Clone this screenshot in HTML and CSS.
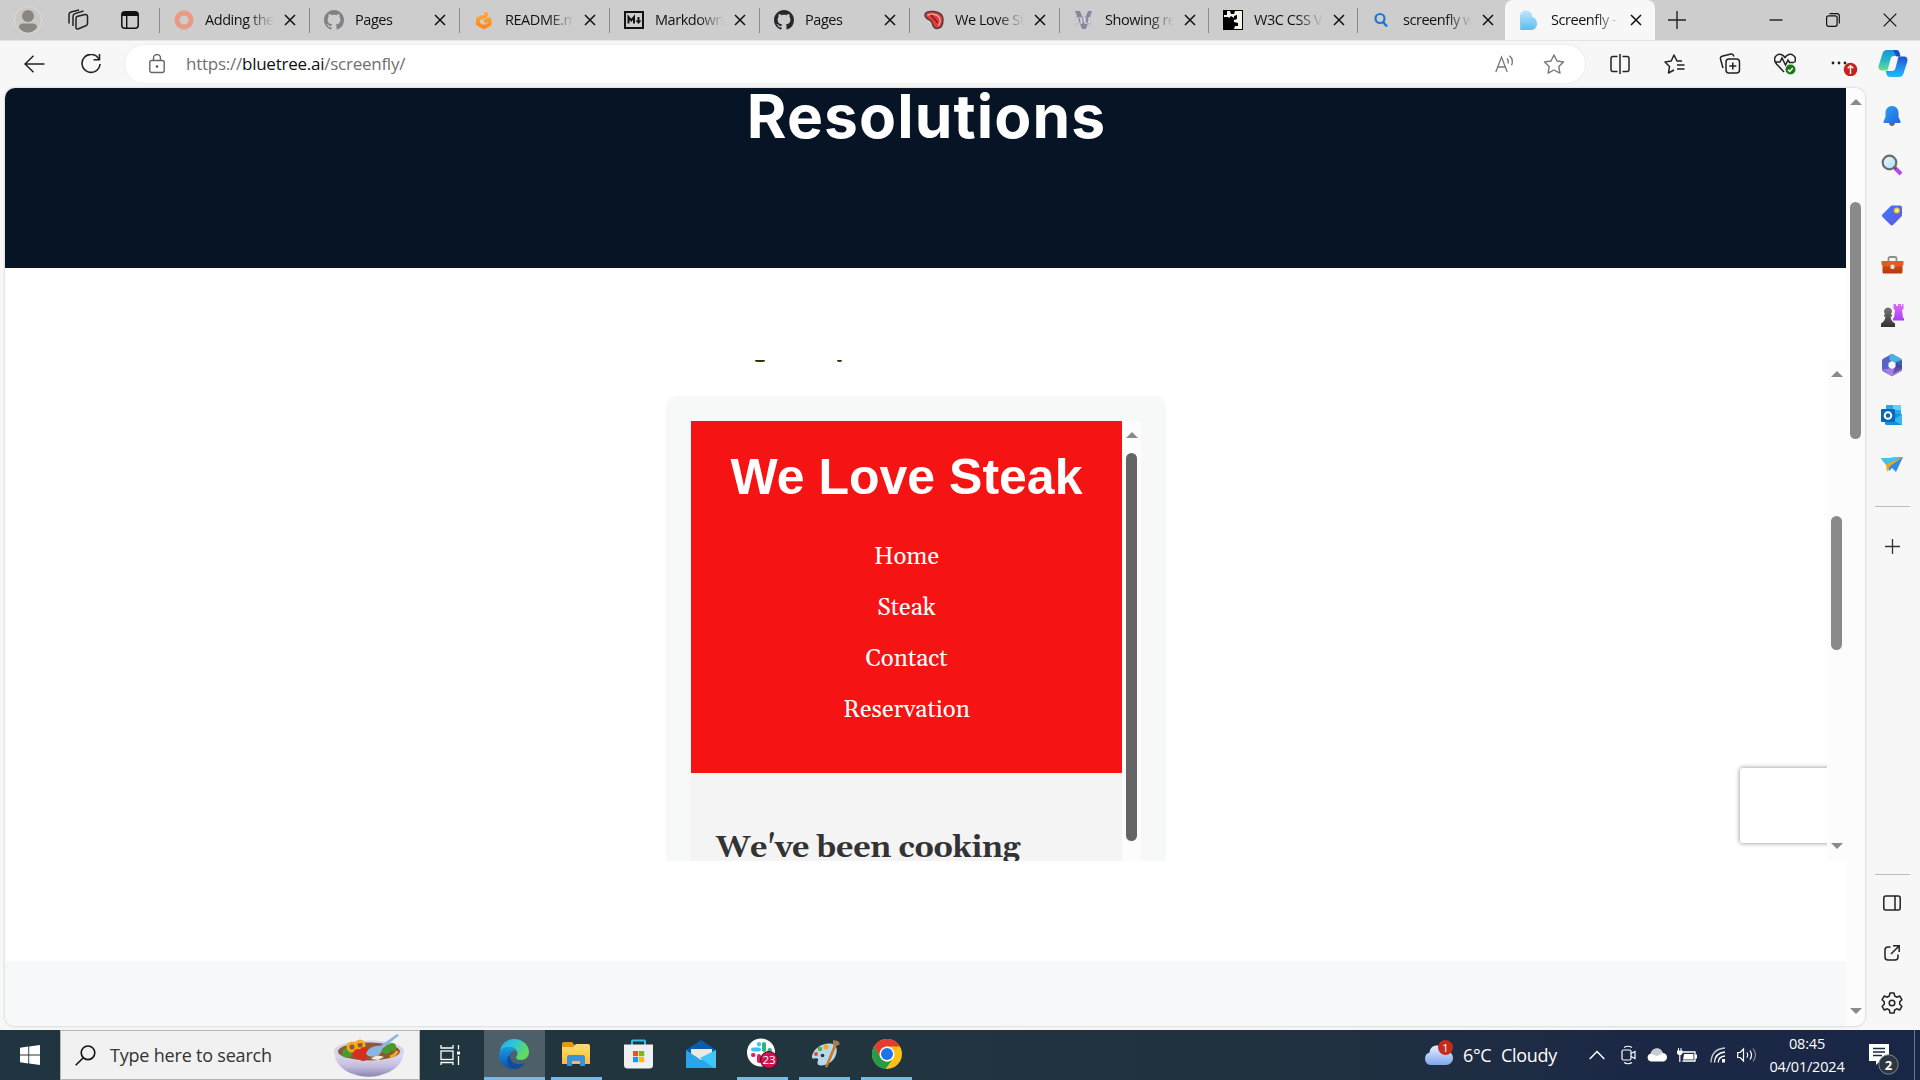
FILE: index.html
```html
<!DOCTYPE html>
<html lang="en">
<head>
<meta charset="utf-8">
<title>Screenfly</title>
<link rel="stylesheet" href="styles.css">
</head>
<body>
<svg width="0" height="0" class="defs">
  <defs>
    <linearGradient id="gBlue" x1="0" y1="0" x2="1" y2="1"><stop offset="0" stop-color="#2aa6ef"/><stop offset="1" stop-color="#2460e6"/></linearGradient>
    <linearGradient id="gTag" x1="0" y1="0" x2="1" y2="1"><stop offset="0" stop-color="#3b7af5"/><stop offset="1" stop-color="#6355e8"/></linearGradient>
    <linearGradient id="gBox" x1="0" y1="0" x2="0" y2="1"><stop offset="0" stop-color="#e4541b"/><stop offset="1" stop-color="#b4370f"/></linearGradient>
    <linearGradient id="gPink" x1="0" y1="0" x2="0" y2="1"><stop offset="0" stop-color="#e26bff"/><stop offset="1" stop-color="#a43df0"/></linearGradient>
    <linearGradient id="gPawn" x1="0" y1="0" x2="0" y2="1"><stop offset="0" stop-color="#777"/><stop offset="1" stop-color="#333"/></linearGradient>
    <linearGradient id="gLens" x1="0" y1="0" x2="1" y2="1"><stop offset="0" stop-color="#f2fbff"/><stop offset="1" stop-color="#a9daf7"/></linearGradient>
    <linearGradient id="gCopA" x1="0" y1="0" x2="0" y2="1"><stop offset="0" stop-color="#1594d8"/><stop offset=".5" stop-color="#25b8c4"/><stop offset="1" stop-color="#6fdc8c"/></linearGradient>
    <linearGradient id="gCopB" x1="0" y1="0" x2="0" y2="1"><stop offset="0" stop-color="#1d4fd0"/><stop offset=".5" stop-color="#2389ee"/><stop offset="1" stop-color="#19c0f5"/></linearGradient>
    <linearGradient id="gEdge" x1="0" y1="0" x2="1" y2=".4"><stop offset="0" stop-color="#2aa8e0"/><stop offset=".5" stop-color="#2fc6d6"/><stop offset="1" stop-color="#62dc58"/></linearGradient>
    <linearGradient id="gEdgeB" x1="0" y1="0" x2="0" y2="1"><stop offset="0" stop-color="#1b9ce0"/><stop offset="1" stop-color="#0f4fae"/></linearGradient>
    <linearGradient id="gFolder" x1="0" y1="0" x2="0" y2="1"><stop offset="0" stop-color="#ffdc73"/><stop offset="1" stop-color="#f6bd3a"/></linearGradient>
    <linearGradient id="gBowl" x1="0" y1="0" x2="0" y2="1"><stop offset="0" stop-color="#e9e6f6"/><stop offset=".6" stop-color="#c4bedd"/><stop offset="1" stop-color="#8d84b3"/></linearGradient>
    <linearGradient id="gCloud" x1="0" y1="0" x2="0" y2="1"><stop offset="0" stop-color="#e6f0ff"/><stop offset="1" stop-color="#7ea6ee"/></linearGradient>
    <linearGradient id="gFly" x1="0" y1="0" x2="0" y2="1"><stop offset="0" stop-color="#bfe6f8"/><stop offset="1" stop-color="#56bdf0"/></linearGradient>
    <linearGradient id="gGit" x1="0" y1="0" x2="0" y2="1"><stop offset="0" stop-color="#ffae3d"/><stop offset="1" stop-color="#ff8722"/></linearGradient>
    <symbol id="close" viewBox="0 0 12 12"><path d="M1 1l10 10M11 1L1 11" stroke="#111" stroke-width="1.5" fill="none"/></symbol>
    <symbol id="octo" viewBox="0 0 16 16"><path d="M8 0C3.58 0 0 3.58 0 8c0 3.54 2.29 6.53 5.47 7.59.4.07.55-.17.55-.38 0-.19-.01-.82-.01-1.49-2.01.37-2.53-.49-2.69-.94-.09-.23-.48-.94-.82-1.13-.28-.15-.68-.52-.01-.53.63-.01 1.08.58 1.23.82.72 1.21 1.87.87 2.33.66.07-.52.28-.87.51-1.07-1.78-.2-3.64-.89-3.64-3.95 0-.87.31-1.59.82-2.15-.08-.2-.36-1.02.08-2.12 0 0 .67-.21 2.2.82.64-.18 1.32-.27 2-.27s1.36.09 2 .27c1.53-1.04 2.2-.82 2.2-.82.44 1.1.16 1.92.08 2.12.51.56.82 1.27.82 2.15 0 3.07-1.87 3.75-3.65 3.95.29.25.54.73.54 1.48 0 1.07-.01 1.93-.01 2.2 0 .21.15.46.55.38A8.01 8.01 0 0 0 16 8c0-4.42-3.58-8-8-8"/></symbol>
  </defs>
</svg>

<header class="titlebar">
  <div class="slot slot-profile"><svg width="28" height="28" viewBox="0 0 28 28"><circle cx="14" cy="14" r="13.5" fill="#cbc8c4" stroke="#dedbd7"/><circle cx="14" cy="10" r="6" fill="#8a8683"/><path d="M5 21.5C5 19 6.500 17.500 9 17.500h10c2.500 0 4 1.500 4 4-2 3.500-5.500 5-9 5s-7-1.500-9-5z" fill="#8a8683"/></svg></div>
  <div class="slot slot-spaces"><svg width="22" height="22" viewBox="0 0 22 22" fill="none" stroke="#222" stroke-width="1.500"><path d="M10 7.500l8-2c1.500-.3 2.500.5 2.500 2v7c0 1-.6 1.800-1.600 2.200L11 20c-1.300.4-2-.4-2-1.600V9.500c0-1 .3-1.700 1-2z"/><path d="M6 17V7.500C6 6 6.800 5 8 4.600L16.500 2M2 14.500V5.800C2 4.400 2.800 3.400 4 3L12 .9"/></svg></div>
  <div class="slot slot-actions"><svg width="18" height="18" viewBox="0 0 18 18"><rect x=".8" y=".8" width="16.400" height="16.400" rx="3" fill="none" stroke="#111" stroke-width="1.500"/><path d="M1 5V3q0-2 2-2h12q2 0 2 2v2zM5 5h1.400v12H5z" fill="#111"/></svg></div>
  <nav class="tabs">
    <div class="tab"><svg class="fav" viewBox="0 0 20 20"><circle cx="10" cy="10" r="7" fill="none" stroke="#e89b82" stroke-width="5"/></svg><span class="tab-title">Adding the</span><svg class="x"><use href="#close"/></svg></div>
    <div class="tab"><svg class="fav" fill="#808285"><use href="#octo"/></svg><span class="tab-title">Pages</span><svg class="x"><use href="#close"/></svg></div>
    <div class="tab"><svg class="fav" viewBox="0 0 20 20"><path d="M12 2v3.500L4 9v5l6 3.200 5.500-3v-5L10 11.500" fill="none" stroke="url(#gGit)" stroke-width="4" stroke-linejoin="round"/></svg><span class="tab-title">README.m</span><svg class="x"><use href="#close"/></svg></div>
    <div class="tab"><svg class="fav" viewBox="0 0 20 20" fill="none" stroke="#111"><rect x="1" y="2" width="18" height="16" stroke-width="2"/><path d="M4.500 13.500V7l2.800 3.400L10 7v6.500M14.500 7v5" stroke-width="2"/><path d="M11.500 10.500h6l-3 3.500z" fill="#111" stroke="none"/></svg><span class="tab-title">Markdown</span><svg class="x"><use href="#close"/></svg></div>
    <div class="tab"><svg class="fav" fill="#24292f"><use href="#octo"/></svg><span class="tab-title">Pages</span><svg class="x"><use href="#close"/></svg></div>
    <div class="tab"><svg class="fav" viewBox="0 0 20 20"><path d="M1 5c0-3 4-4 9-3.500s9 3 9 8-2 9-6 9-4-3-5-6-7-3-7-7.500z" fill="#e63a3f" stroke="#4a3a38" stroke-width="1.400"/><path d="M3.500 5.500c2-2 8-2 11 1s1.500 6 0 9" fill="none" stroke="#f7b2ac" stroke-width="1.200"/><path d="M7 5l7 8" stroke="#7d1a20" stroke-width="1.300"/></svg><span class="tab-title">We Love St</span><svg class="x"><use href="#close"/></svg></div>
    <div class="tab"><svg class="fav" viewBox="0 0 20 20"><path d="M1 1h5l4 10 4-10h4l-6 18H8z" fill="#8a86a0"/><text x="1" y="14" class="nu">nu</text></svg><span class="tab-title">Showing re</span><svg class="x"><use href="#close"/></svg></div>
    <div class="tab tab-149"><svg class="fav" viewBox="0 0 20 20"><path d="M0 0h20v20H0z"/><path d="M4 1h3l1 3 3 0 1-3h7v18h-8l1-3h3v-3l-4-1v-2l3-1V5l-3 1v2l-3-2-3 3H1V5h3z" fill="#f4f3ea"/><path d="M0 7l5 0 4 4 1 9H0z"/></svg><span class="tab-title">W3C CSS V</span><svg class="x"><use href="#close"/></svg></div>
    <div class="tab tab-148"><svg class="fav" viewBox="0 0 20 20" fill="none" stroke="#1a78d2"><circle cx="8" cy="8.500" r="4.500" stroke-width="2.200"/><path d="M11 12l4 4.500" stroke-width="2.600"/></svg><span class="tab-title">screenfly w</span><svg class="x"><use href="#close"/></svg></div>
    <div class="tab tab-active"><svg class="fav" viewBox="0 0 20 20"><path d="M0 20V6c0-3 2.500-5.500 6-5.500 4 0 6 2.500 6 6 3 1 5 3.500 5 7C17 17 15 20 11 20z" fill="url(#gFly)"/><path d="M0 20c0-7 4-9 8-9 5 0 7 3 7 6" fill="none" stroke="#8ed4f4"/></svg><span class="tab-title">Screenfly -</span><svg class="x"><use href="#close"/></svg></div>
  </nav>
  <div class="slot slot-new"><svg width="18" height="18" viewBox="0 0 18 18"><path d="M9 0v18M0 9h18" stroke="#222" stroke-width="1.400"/></svg></div>
  <div class="window-buttons">
    <div class="slot"><svg width="14" height="14" viewBox="0 0 14 14"><path d="M.5 7h13" stroke="#111" stroke-width="1.300"/></svg></div>
    <div class="slot"><svg width="14" height="14" viewBox="0 0 14 14" fill="none" stroke="#111" stroke-width="1.200"><rect x=".6" y="2.800" width="10.500" height="10.500" rx="2"/><path d="M3.500.7h7.500q2.300 0 2.300 2.300v7.500"/></svg></div>
    <div class="slot"><svg width="14" height="14" viewBox="0 0 14 14"><path d="M.7.700l12.600 12.600M13.300.7L.7 13.300" stroke="#111" stroke-width="1.200"/></svg></div>
  </div>
</header>

<div class="toolbar">
  <div class="slot slot-back"><svg width="21" height="18" viewBox="0 0 21 18" fill="none" stroke="#222" stroke-width="1.500"><path d="M9.500.7L1 9l8.500 8.300M1 9h19.500"/></svg></div>
  <div class="slot slot-reload"><svg width="22" height="20" viewBox="0 0 22 20" fill="none" stroke="#222" stroke-width="1.600"><path d="M19 5.200A9 9 0 1 0 20 10"/><path d="M19.500 0v5.700h-6"/></svg></div>
  <div class="address">
    <svg width="16" height="20" viewBox="0 0 16 20" fill="none" stroke="#666" stroke-width="1.400"><rect x=".8" y="6.500" width="14.400" height="12" rx="2"/><path d="M4.500 6.500V4a3.500 3.500 0 0 1 7 0v2.500"/><circle cx="8" cy="12.500" r="1.300" fill="#555" stroke="none"/></svg>
    <span class="url">https://<b>bluetree.ai</b>/screenfly/</span>
    <svg width="20" height="18" viewBox="0 0 20 18" fill="none" stroke="#777" stroke-width="1.300"><path d="M.8 17L6.500 2l5.700 15M2.800 12h7.500M12 3.500q2 2 1 5M14.500.8q4.500 4 2 9.500"/></svg>
    <svg class="star" width="22" height="20" viewBox="0 0 22 20" fill="none" stroke="#777" stroke-width="1.400" stroke-linejoin="round"><path d="M11 1l3 6 6.500 1-4.700 4.600 1.100 6.500L11 16l-5.900 3.100 1.100-6.500L1.500 8 8 7z"/></svg>
  </div>
  <div class="tools">
    <div class="slot"><svg width="20" height="20" viewBox="0 0 20 20" fill="none" stroke="#222" stroke-width="1.500"><path d="M7.500 2.500H3q-2 0-2 2v11q0 2 2 2h4.500M12.500 2.500H17q2 0 2 2v11q0 2-2 2h-4.500M10 0v20"/></svg></div>
    <div class="slot"><svg width="21" height="20" viewBox="0 0 21 20" fill="none" stroke="#222" stroke-width="1.500" stroke-linejoin="round"><path d="M18 7h-5L10 1 7.200 7 1 8l4.500 4.500-1 6.500L10 16M13 11h7.500M13 15h7.500"/></svg></div>
    <div class="slot"><svg width="22" height="21" viewBox="0 0 22 21" fill="none" stroke="#222" stroke-width="1.500"><rect x="7" y="6" width="13.500" height="14" rx="3"/><path d="M13.800 9.500v7M10.300 13h7M4 15L1.500 6Q1 4 3 3.300L12 1q2-.5 3 2.500"/></svg></div>
    <div class="slot"><svg width="22" height="22" viewBox="0 0 22 22" fill="none" stroke="#222" stroke-width="1.500"><path d="M10 19L2.500 11C0 8-.2 4.500 2.500 2.500 5.500.3 9 1.500 11 4.500c2-3 5.500-4.200 8.500-2 2 1.500 2.300 4.500 1 7M2 9h4l2-4 3.500 7L14 7l1.500 2.500H20"/><circle cx="16.500" cy="16.500" r="5" fill="#137c13" stroke="none"/><path d="M14 16.700l1.800 1.800 3-3.500" stroke="#fff"/></svg></div>
    <div class="slot slot-more"><svg width="28" height="24" viewBox="0 0 28 24"><g fill="#222"><circle cx="3" cy="11" r="1.400"/><circle cx="9" cy="11" r="1.400"/><circle cx="15" cy="11" r="1.400"/></g><circle cx="20.500" cy="17.500" r="6.800" fill="#c5221f"/><path d="M20.500 22v-8M17.700 16.300l2.800-2.700 2.800 2.700" fill="none" stroke="#fff" stroke-width="1.400"/></svg></div>
  </div>
  <div class="slot slot-copilot"><svg width="30" height="27" viewBox="0 0 30 27"><path d="M9 0h9c2 0 3 1 3.500 3l.8 3H16c-2 0-3 1-3.500 3L9.500 20.500H4C1 20.500 0 18 .7 15.500L4.500 3.500C5.200 1.200 6.500 0 9 0z" fill="url(#gCopA)"/><path d="M21 27h-9c-2 0-3-1-3.500-3l-.8-3H14c2 0 3-1 3.500-3l3-11.500H26c3 0 4 2.500 3.300 5L25.500 23.500C24.800 25.800 23.500 27 21 27z" fill="url(#gCopB)"/><path d="M15 0h3c2 0 3 1 3.500 3l1 3.500h-4z" fill="#174ec0"/></svg></div>
</div>

<div class="main">
  <section class="viewport">
    <div class="page">
      <div class="hero"><h1>Resolutions</h1></div>
      <div class="frame-row">
        <div class="frame">
          <div class="cut-line"><i class="cut cut-g"></i><i class="cut cut-y"></i></div>
          <div class="device">
            <div class="site">
              <div class="site-head">
                <h2>We Love Steak</h2>
                <ul><li>Home</li><li>Steak</li><li>Contact</li><li>Reservation</li></ul>
              </div>
              <h3>We've been cooking</h3>
            </div>
            <div class="bar device-bar"><i class="up"></i><i class="thumb"></i></div>
          </div>
          <div class="badge-box"></div>
        </div>
        <div class="bar frame-bar"><i class="up"></i><i class="thumb"></i><i class="down"></i></div>
      </div>
      <div class="band"></div>
    </div>
    <div class="bar page-bar"><i class="up"></i><i class="thumb"></i><i class="down"></i></div>
  </section>

  <aside class="sidebar">
    <div class="slot"><svg width="20" height="22" viewBox="0 0 20 22"><path d="M7 18h6q-.5 3-3 3t-3-3z" fill="#666"/><path d="M10 1c4 0 6.500 3 6.500 7v4l2 4.500q.5 1.500-1 1.500h-15Q1 18 1.500 16.500l2-4.500V8C3.500 4 6 1 10 1z" fill="url(#gBlue)"/></svg></div>
    <div class="slot"><svg width="22" height="22" viewBox="0 0 22 22"><path d="M14 14l6 6" stroke="#b847ee" stroke-width="4"/><path d="M12 12l3 3" stroke="#555" stroke-width="2"/><circle cx="8.500" cy="8.500" r="6.800" fill="url(#gLens)" stroke="#6c6c6c" stroke-width="2.200"/></svg></div>
    <div class="slot"><svg width="22" height="22" viewBox="0 0 22 22"><path d="M11 1.500h8q2 0 2 2v7.500q0 1-.8 1.800l-8 8q-1.400 1.400-2.800 0l-7.800-7.800q-1.400-1.400 0-2.800l8-8q.6-.7 1.400-.7z" fill="url(#gTag)"/><circle cx="15.800" cy="6.500" r="2.300" fill="#fff3c0" stroke="#f3c32d" stroke-width="1.500"/></svg></div>
    <div class="slot"><svg width="23" height="20" viewBox="0 0 23 20"><path d="M7.500 6V3.500q0-1.500 1.500-1.500h5q1.500 0 1.500 1.500V6" fill="none" stroke="#8e8e8e" stroke-width="1.800"/><rect x="1.500" y="6" width="20" height="12.500" rx="1.500" fill="url(#gBox)"/><path d="M.5 6h22v4q-5 2-11 2T.5 10z" fill="#e55a22"/><rect x="9.500" y="9.500" width="4" height="4.500" rx="1.500" fill="#d8e4ea"/></svg></div>
    <div class="slot"><svg width="24" height="24" viewBox="0 0 24 24"><path d="M14 1h2v2h2V1h3v2h1V1h1.500v5l-1.500 1 1 8h1v2.500H13V15h1l1-8-1.500-1V1z" fill="url(#gPink)"/><path d="M8 4.500a4 4 0 0 1 2.700 7H12v2h-1.500q.5 4 2.500 5.500l2 1.500V24H1v-3.500L3 19q2-1.500 2.500-5.500H4v-2h1.300A4 4 0 0 1 8 4.500z" fill="url(#gPawn)"/></svg></div>
    <div class="slot"><svg width="22" height="24" viewBox="0 0 22 24"><path d="M11 .8l8.500 4.700q1.500.9 1.500 2.500v8q0 1.600-1.500 2.500L11 23.200 2.500 18.500Q1 17.600 1 16V8q0-1.600 1.500-2.500z" fill="#5a62c9"/><path d="M11 .8l8.500 4.700Q21 6.400 21 8v5l-6-3-6.500-3V3z" fill="#4ab3e6"/><path d="M1 16q6 1 9.500-2.500L21 16q0 1.600-1.500 2.500L11 23.200z" fill="#a77fe2"/><path d="M15 9l6-2v9l-9 5z" fill="#3d3f8f" opacity=".7"/><path d="M11 8l3.500 2v4L11 16l-3.500-2v-4z" fill="#f7f7f7"/></svg></div>
    <div class="slot"><svg width="22" height="22" viewBox="0 0 22 22"><path d="M5 1h15v10H5z" fill="#28a8ea"/><path d="M12 1h8v5h-8z" fill="#5fd3f9"/><path d="M4 20V10h17v11H5z" fill="#1490df"/><path d="M21 10l-9 6 9 5z" fill="#38b9f2"/><rect x="0" y="5" width="14" height="13" rx="1" fill="#0a65bd"/><circle cx="7" cy="11.500" r="3.300" fill="none" stroke="#fff" stroke-width="2"/></svg></div>
    <div class="slot"><svg width="22" height="18" viewBox="0 0 22 18"><path d="M0 2.500L22 1l-7 15-4-4-3 3-2-6z" fill="#2d8de8"/><path d="M0 2.500L22 1 5 9z" fill="#3fc3f2"/><path d="M22 1L5 8.500l1 7.500 3-6z" fill="#f3a616"/></svg></div>
    <hr>
    <div class="slot slot-add"><svg width="15" height="15" viewBox="0 0 15 15"><path d="M7.500 0v15M0 7.500h15" stroke="#333" stroke-width="1.300"/></svg></div>
    <hr class="lower">
    <div class="slot"><svg width="18" height="16" viewBox="0 0 18 16" fill="none" stroke="#222" stroke-width="1.500"><rect x=".8" y="1" width="16.400" height="14" rx="2"/><path d="M12 1v14"/></svg></div>
    <div class="slot"><svg width="16" height="16" viewBox="0 0 16 16" fill="none" stroke="#222" stroke-width="1.500"><path d="M6.500 2H4Q1 2 1 5v7q0 3 3 3h7q3 0 3-3V9.500M9 .8h6.200V7M15 1L7 9"/></svg></div>
    <div class="slot"><svg width="22" height="22" viewBox="0 0 22 22" fill="none" stroke="#222" stroke-width="1.500" stroke-linejoin="round"><path d="M9 1h4l.7 3 2 1.200L18.700 4l2.200 3.700-2.200 2.100v2.400l2.200 2.100L18.700 18l-3-1.200-2 1.200-.7 3H9l-.7-3-2-1.200-3 1.200-2.200-3.700 2.200-2.100V9.800L1.100 7.700 3.300 4l3 1.200 2-1.200z"/><circle cx="11" cy="11" r="2.800"/></svg></div>
  </aside>
</div>

<footer class="taskbar">
  <div class="slot start"><svg width="20" height="20" viewBox="0 0 20 20" fill="#fff"><path d="M0 2.800l8.300-1.200v8H0zM9.200 1.400L20 0v9.600H9.200zM0 10.400h8.300v8L0 17.200zM9.200 10.400H20V20L9.200 18.600z"/></svg></div>
  <div class="search">
    <svg width="21" height="21" viewBox="0 0 21 21" fill="none" stroke="#111" stroke-width="1.600"><circle cx="13" cy="7.800" r="6.800"/><path d="M8.300 12.800L.7 20.300"/></svg>
    <span>Type here to search</span>
    <svg width="70" height="44" viewBox="0 0 70 44"><path d="M0 17q0 15 15 22.500Q35 48 54 39.500 70 32 70 17z" fill="url(#gBowl)"/><ellipse cx="35" cy="18" rx="35" ry="10.500" fill="#d6d2e8"/><ellipse cx="35" cy="18.500" rx="31" ry="9" fill="#8a5a34"/><g fill="#4c9a2a"><circle cx="13" cy="20" r="5"/><circle cx="52" cy="16" r="5"/><circle cx="58" cy="14" r="4"/></g><g fill="none" stroke="#f7a81b" stroke-width="3"><circle cx="18" cy="14" r="4"/><circle cx="26" cy="12" r="4"/><path d="M56 24q6-2 7-6"/></g><g fill="#d5301f"><circle cx="24" cy="21" r="5"/><circle cx="30" cy="18" r="4"/><circle cx="29" cy="24" r="4"/></g><path d="M37 26q5-6 13-2l-6 3z" fill="#fbe9d4"/><path d="M63 1l2 1.500L48 16q0 5-6 7-7 2-10-2 2-7 10-8 3-.5 4 0z" fill="#8db5e4"/></svg>
  </div>
  <div class="slot taskview"><svg width="21" height="20" viewBox="0 0 21 20" fill="none" stroke="#fff" stroke-width="1.300"><rect x="1" y="6" width="12" height="8.500"/><path d="M1 0v3h12V0M1 20v-2.500h12V20M18.500 0v4.500M18.500 11v9"/><path d="M17 6.500h3v3h-3z" fill="#fff" stroke="none"/></svg></div>
  <div class="app app-current"><svg width="30" height="30" viewBox="0 0 30 30"><path d="M1 12C2 5 8 0 15 0c9 0 15 6.500 15 13 0 5-4 8-8 8-3.500 0-5-1.500-5-2.500s1.500-1.500 1.500-4C18.500 11 15 8 11 8 6 8 2 11 1 15z" fill="url(#gEdge)"/><path d="M0 15C1 10 5 8 9 8c5 0 8 2 9 5-2-2-7-2-7 4 0 6 6 10 15 7-3 4-7 6-11 6C6 30-1 23 0 15z" fill="url(#gEdgeB)"/><path d="M11 16c-1 7 6 12 15 8-3 4-7 6-11 6C8 28 6 19 11 16z" fill="#0f4c9c"/></svg></div>
  <div class="app app-folder"><svg width="28" height="26" viewBox="0 0 28 26"><path d="M0 3q0-2 2-2h8l3 3.500V8H0z" fill="#dc9a12"/><path d="M0 6h11l3-3h12q2 0 2 2v18H0z" fill="url(#gFolder)"/><path d="M5 25v-9q0-2 2-2h14q2 0 2 2v9h-5v-5h-8v5z" fill="#3c92d6"/></svg></div>
  <div class="app app-store"><svg width="29" height="30" viewBox="0 0 29 30"><path d="M8 7V2.500Q8 1.500 9 1.500h11q1 0 1 1V7" fill="none" stroke="#35bff0" stroke-width="2"/><path d="M0 5.500h29V26q0 3.500-3.500 3.500h-22Q0 29.500 0 26z" fill="#f0f0f2"/><path d="M9 12h5.200v5.200H9z" fill="#f25022"/><path d="M15 12h5.200v5.200H15z" fill="#7fba00"/><path d="M9 18h5.200v5.200H9z" fill="#00a4ef"/><path d="M15 18h5.200v5.200H15z" fill="#ffb900"/></svg></div>
  <div class="app app-mail"><svg width="30" height="28" viewBox="0 0 30 28"><path d="M0 10L15 0l15 10v4H0z" fill="#0b5cab"/><path d="M5 9h21v11H5z" fill="#e9e9ea"/><path d="M0 10l15 10L30 10v18H0z" fill="#2aa5ec"/><path d="M30 10v18H28L14 18z" fill="#3fc8f6"/></svg></div>
  <div class="app app-run"><svg width="31" height="31" viewBox="0 0 31 31"><circle cx="14" cy="14.500" r="14" fill="#fff"/><g stroke-width="4" stroke-linecap="round"><path d="M12 6v.5M6 11.500h6" stroke="#36c5f0"/><path d="M17 6v6M22.500 12h.5" stroke="#2eb67d"/><path d="M6 17h.5M12 18v5" stroke="#e01e5a"/></g><circle cx="22" cy="22" r="8.500" fill="#cf1450" stroke="#3c0a1c"/><text x="22" y="26" class="count">23</text></svg></div>
  <div class="app app-run"><svg width="30" height="30" viewBox="0 0 30 30"><path d="M2 17C4 9 12 4 20 4.500c6 .5 8 5 6 11-2 7-9 11-15 11-4 0-4-3-3-5 .8-1.700-1-2.500-3-2-2 .6-3.500-.5-3-2.500z" fill="#b9d7ea"/><circle cx="6" cy="15" r="2" fill="#e04a3a"/><circle cx="10" cy="10" r="2.300" fill="#5fae44"/><circle cx="16" cy="8" r="2.500" fill="#f6a81c"/><circle cx="12.500" cy="16.500" r="1.800" fill="#23353f"/><path d="M15.500 28l9-22 1.500.7L17 28z" fill="#e58b2a" stroke="#c76c1a"/><path d="M23 1l5 1 2 3-5 3-2-2z" fill="#a87d52"/></svg></div>
  <div class="app app-run"><svg width="30" height="30" viewBox="0 0 30 30"><circle cx="15" cy="15" r="15" fill="#fbc116"/><path d="M2 7.500A15 15 0 0 1 28 7.500H15a7.500 7.500 0 0 0-6.500 11.200z" fill="#e33b2e"/><path d="M2 7.500A15 15 0 0 0 13.500 30l6.500-9a7.500 7.500 0 0 1-11.500-2.500z" fill="#269b48"/><circle cx="15" cy="15" r="7.500" fill="#fff"/><circle cx="15" cy="15" r="6" fill="#1f73e8"/></svg></div>

  <div class="tray">
    <svg class="weather-icon" width="31" height="26" viewBox="0 0 31 26"><path d="M7 25a6.500 6.500 0 0 1-.5-12.500C7 8 10 5.500 14 5.500c4 0 6.500 2 7.500 5.500 5-.5 8.500 2.500 8.500 7 0 4-3 7-7 7z" fill="url(#gCloud)"/><circle cx="22.500" cy="7.500" r="7.500" fill="#c42b1c"/><text x="22.500" y="12" class="one">1</text></svg>
    <span class="temp">6°C</span><span class="sky">Cloudy</span>
    <svg class="chev" width="16" height="10" viewBox="0 0 16 10"><path d="M.7 9L8 1.500 15.300 9" fill="none" stroke="#fff" stroke-width="1.500"/></svg>
    <svg class="cam" width="15" height="20" viewBox="0 0 15 20" fill="none" stroke="#fff" stroke-width="1.200"><rect x="1" y="5" width="9" height="10" rx="1.500"/><path d="M10 8.500l4-2v7l-4-2M3 2.500Q7 0 11 2.500M3 17.500q4 2.500 8 0"/></svg>
    <svg class="drive" width="20" height="14" viewBox="0 0 20 14"><path d="M4 13.500a4 4 0 0 1-.5-7.800C5 2 7 .5 10 .5c3 0 5 2 5.800 4.500 2.700.2 4.200 2 4.200 4.300 0 2.500-1.800 4.200-4 4.200z" fill="#fff"/><path d="M3.500 5.700C5 2 7 .5 10 .5c3 0 5 2 5.800 4.500L10 8z" fill="#c7cbd2"/></svg>
    <svg class="battery" width="20" height="15" viewBox="0 0 20 15"><path d="M4 4h14v9H5.500" fill="none" stroke="#fff" stroke-width="1.300"/><path d="M7 6h9.500v5.500H6zM18 6.500h2v4h-2zM0 2.500h5.500v3L4 7H1.500L0 5.500zM1 0h1v3H1zM3.500 0h1v3h-1zM2.200 6h1.200v8H2.200z" fill="#fff"/></svg>
    <svg class="wifi" width="16" height="16" viewBox="0 0 16 16" fill="none" stroke="#fff" stroke-width="1.300"><path d="M1 15.500Q1.500 2 15 1" opacity=".75"/><path d="M4.500 15.500Q5 6 15 5M8.200 15.500Q8.500 9.500 15 9"/><path d="M12 12h3v3.500h-3z" fill="#fff" stroke="none"/></svg>
    <svg class="sound" width="20" height="16" viewBox="0 0 20 16" fill="none" stroke="#fff" stroke-width="1.200"><path d="M.7 5.500h2.500L6.500 2v12L3.200 10.500H.7zM10 5.500q1.500 2.500 0 5M13 3.500q3 4.500 0 9"/><path d="M16 1.500q5 6.500 0 13" opacity=".5"/></svg>
    <div class="clock"><span class="time">08:45</span><span class="date">04/01/2024</span></div>
    <svg class="notes" width="32" height="32" viewBox="0 0 32 32"><path d="M0 1h20v17H11l-4 4v-4H0z" fill="#fff"/><path d="M4 5.500h12M4 9h12M4 12.500h9" stroke="#1b2947" stroke-width="1.300"/><circle cx="19.500" cy="21.500" r="9.700" fill="#303640" stroke="#808894"/><text x="19.500" y="26.500" class="two">2</text></svg>
    <i class="peek"></i>
  </div>
</footer>
</body>
</html>
```
FILE: styles.css
```css
* { box-sizing: border-box; }
body { margin: 0; width: 1920px; height: 1080px; overflow: hidden; display: flex; flex-direction: column; background: #f7f7f7; font-family: "Open Sans", "Noto Sans", sans-serif; color: #111; }
svg { display: block; flex: none; }
.defs { position: absolute; }
h1, h2, h3, ul { margin: 0; padding: 0; list-style: none; }
.slot { display: flex; align-items: center; justify-content: center; flex: none; }

/* Title bar and tabs */
.titlebar { display: flex; height: 40px; flex: none; background: #cdcdcd; }
.slot-profile { width: 56px; }
.slot-spaces { width: 43px; }
.slot-actions { width: 61px; }
.tabs { display: flex; margin-left: -1px; }
.tab { width: 150px; display: flex; align-items: center; padding-left: 14px; position: relative; border-left: 1px solid transparent; }
.tab::before { content: ""; position: absolute; left: -1px; top: 8px; width: 1px; height: 25px; background: #8a8a8a; }
.tab:nth-child(7), .tab-149 { width: 149px; }
.tab-148 { width: 148px; }
.tab-active { background: #f7f7f7; border-radius: 8px 8px 0 0; }
.tab-active::before { display: none; }
.fav { width: 20px; height: 20px; margin-right: 11px; }
.tab-title { width: 74px; padding-bottom: 2px; font-size: 14.5px; letter-spacing: -0.45px; white-space: nowrap; -webkit-mask-image: linear-gradient(90deg, #000 58%, transparent 93%); mask-image: linear-gradient(90deg, #000 58%, transparent 93%); }
.x { width: 12px; height: 12px; margin-left: 5px; }
.nu { font: bold 13px "Liberation Sans", sans-serif; fill: #eee; stroke: #8a86a0; stroke-width: .4px; }
.slot-new { width: 43px; }
.window-buttons { display: flex; margin-left: auto; padding: 0 2px 1px 0; }
.window-buttons .slot { width: 57px; }

/* Toolbar */
.toolbar { display: flex; align-items: center; height: 48px; flex: none; border-top: 1px solid #e4e4e4; padding-bottom: 2px; }
.slot-back { width: 69px; }
.slot-reload { width: 43px; }
.address { display: flex; align-items: center; width: 1460px; height: 38px; margin-left: 13px; padding: 0 20px 0 24px; border-radius: 19px; background: #fff; box-shadow: 0 0 3px rgba(0, 0, 0, .07); }
.url { flex: 1; margin-left: 21px; padding-bottom: 1px; font-size: 17px; letter-spacing: -0.25px; color: #707070; }
.url b { font-weight: 400; color: #111; }
.star { margin-left: 28px; }
.tools { display: flex; margin-left: 7px; }
.tools .slot { width: 55.2px; }
.slot-more { padding-left: 8px; }
.slot-copilot { flex: 1; padding-right: 2px; }

/* Page viewport */
.main { display: flex; height: 942px; flex: none; }
.viewport { display: flex; width: 1860px; height: 938px; margin-left: 5px; border-radius: 10px; overflow: hidden; background: #fff; box-shadow: 0 0 2px 1px #dedede; }
.page { display: flex; flex-direction: column; width: 1841px; }
.hero { height: 180px; background: #071425; text-align: center; }
.hero h1 { font: 700 60.5px/57px Inter, sans-serif; letter-spacing: 1.1px; color: #fff; padding-left: 2px; }
.frame-row { display: flex; height: 501px; margin-top: 92px; }
.frame { width: 1822px; overflow: hidden; position: relative; }
.cut-line { display: flex; height: 36px; padding-left: 750px; }
.cut { height: 2px; background: #3a3000; border-radius: 0 0 5px 5px; }
.cut-g { width: 10px; }
.cut-y { width: 5px; margin-left: 72px; }
.device { display: flex; width: 500px; height: 480px; margin-left: 661px; padding: 25px 25px 0; border-radius: 12px 12px 0 0; background: #f6f9f8; }
.site { width: 431px; background: #f4f4f4; }
.site-head { height: 352px; background: #f51313; color: #fff; text-align: center; padding-top: 28px; }
.site-head h2 { font: bold 50px/56px "Liberation Sans", Arial, sans-serif; }
.site-head ul { margin-top: 27px; font: 24px/51px Gelasio, Georgia, "Liberation Serif", serif; }
.site h3 { margin: 56px 0 0 25px; font: bold 30.5px/38px Gelasio, Georgia, "Liberation Serif", serif; letter-spacing: -0.3px; color: #333; white-space: nowrap; }
.badge-box { position: absolute; left: 1735px; top: 408px; width: 100px; height: 75px; border-radius: 3px; background: #fff; box-shadow: 0 0 5px #888; }
.band { height: 65px; margin-top: 100px; background: #f5f9fa; }

/* Scrollbars */
.bar { display: flex; flex-direction: column; align-items: center; width: 19px; flex: none; background: #fcfcfc; }
.up, .down { border: 6px solid transparent; border-top-width: 0; border-bottom: 6px solid #8a8a8a; }
.down { border-bottom-width: 0; border-top: 6px solid #8a8a8a; margin-top: auto; }
.thumb { width: 11px; border-radius: 6px; background: #8a8a8a; }
.page-bar .up { margin-top: 11px; }
.page-bar .thumb { margin-top: 97px; height: 237px; }
.page-bar .down { margin-bottom: 12px; }
.frame-bar .up { margin-top: 11px; }
.frame-bar .thumb { margin-top: 139px; height: 134px; }
.frame-bar .down { margin-bottom: 12px; }
.device-bar .up { margin-top: 11px; }
.device-bar .thumb { margin-top: 15px; height: 388px; background: #646464; }

/* Edge sidebar */
.sidebar { display: flex; flex-direction: column; width: 54px; padding-top: 3px; }
.sidebar .slot { height: 50px; }
.sidebar .slot:first-child { height: 49px; }
.sidebar hr { width: 35px; height: 1px; margin: 16px auto 0; border: 0; background: #bcbcbc; flex: none; }
.sidebar .slot-add { height: 78px; }
.sidebar hr.lower { margin-top: 289px; margin-bottom: 3px; }

/* Taskbar */
.taskbar { display: flex; height: 50px; flex: none; background: linear-gradient(90deg, #20353f 0, #21353f 45%, #203040 70%, #1b2845 85%, #1a2645); color: #fff; }
.start { width: 60px; }
.search { display: flex; align-items: center; width: 360px; padding: 0 15px 0 14px; border: 1px solid #b5b5b5; background: #f1f1f1; color: #333; font-size: 18px; letter-spacing: -0.2px; }
.search span { flex: 1; margin-left: 14px; }
.taskview { width: 60px; margin-right: 4px; }
.app { display: flex; align-items: center; justify-content: center; width: 51px; margin-right: 11px; border-bottom: 3px solid transparent; }
.app-current { width: 61px; margin-right: 6px; padding-right: 2px; background: #4d5f68; border-color: #76b9ed; }
.app-folder, .app-run { border-color: #76b9ed; }
.app-folder { padding-right: 2px; }
.count { font: 11.500px "Open Sans", sans-serif; fill: #fff; text-anchor: middle; }
.tray { display: flex; align-items: center; margin-left: auto; font-size: 18px; }
.weather-icon { margin-bottom: 4px; }
.one { font: 11px "Open Sans", sans-serif; fill: #fff; text-anchor: middle; }
.temp { width: 38px; margin-left: 9px; letter-spacing: -0.4px; }
.sky { width: 57px; letter-spacing: -0.3px; }
.chev { margin-left: 31px; }
.cam { margin-left: 16px; }
.drive { margin-left: 11px; }
.battery { margin-left: 10px; }
.wifi { margin-left: 13px; }
.sound { margin-left: 11px; }
.clock { display: flex; flex-direction: column; align-items: center; width: 78px; margin-left: 11px; font-size: 14.500px; line-height: 23px; letter-spacing: -0.2px; }
.notes { margin-left: 23px; margin-top: 8px; }
.two { font: bold 13px "Open Sans", sans-serif; fill: #fff; text-anchor: middle; }
.peek { width: 1px; height: 50px; margin: 0 5px 0 13px; background: #6d7689; }
```
